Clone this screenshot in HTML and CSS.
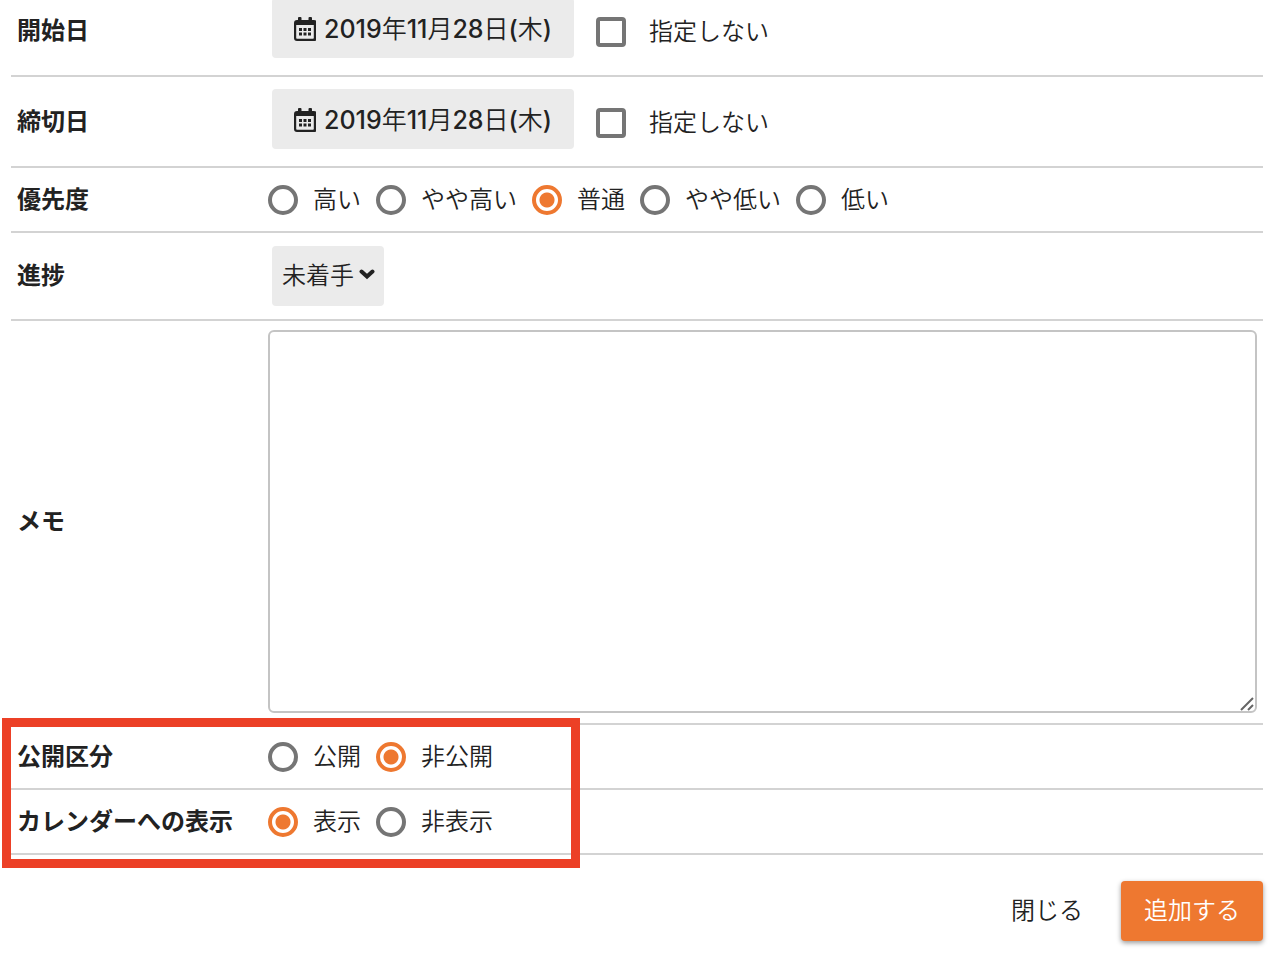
FILE: index.html
```html
<!DOCTYPE html>
<html lang="ja">
<head>
    <meta charset="UTF-8">
    <meta name="viewport" content="width=device-width, initial-scale=1.0">
    <title>ToDoの追加</title>
    <link rel="stylesheet" href="styles.css">
</head>
<body>
    <form class="todo-form">
        <!-- Dates -->
        <div class="row row-date">
            <span class="row-title">開始日</span>
            <div class="row-content">
                <button type="button" class="btn btn-date">
                    <svg class="icon-calendar" viewBox="0 0 22 24" aria-hidden="true">
                        <path fill-rule="evenodd" d="M5 0h1.500q1 0 1 1v2h7V1q0-1 1-1h1.500q1 0 1 1v2h2q3 0 3 3v15q0 3-3 3H3q-3 0-3-3V6q0-3 3-3h1V1q0-1 1-1zM2.200 8v13q0 .8.8.8h16q.8 0 .8-.8V8z"/>
                        <path d="M5 11h3v3H5zM9.500 11h3v3h-3zM14 11h3v3h-3zM5 15.500h3v3H5zM9.500 15.500h3v3h-3zM14 15.500h3v3h-3z"/>
                    </svg>
                    2019年11月28日(木)
                </button>
                <label class="check"><input type="checkbox" name="no_start">指定しない</label>
            </div>
        </div>
        <div class="row row-date">
            <span class="row-title">締切日</span>
            <div class="row-content">
                <button type="button" class="btn btn-date">
                    <svg class="icon-calendar" viewBox="0 0 22 24" aria-hidden="true">
                        <path fill-rule="evenodd" d="M5 0h1.500q1 0 1 1v2h7V1q0-1 1-1h1.500q1 0 1 1v2h2q3 0 3 3v15q0 3-3 3H3q-3 0-3-3V6q0-3 3-3h1V1q0-1 1-1zM2.200 8v13q0 .8.8.8h16q.8 0 .8-.8V8z"/>
                        <path d="M5 11h3v3H5zM9.500 11h3v3h-3zM14 11h3v3h-3zM5 15.500h3v3H5zM9.500 15.500h3v3h-3zM14 15.500h3v3h-3z"/>
                    </svg>
                    2019年11月28日(木)
                </button>
                <label class="check"><input type="checkbox" name="no_limit">指定しない</label>
            </div>
        </div>

        <!-- Priority -->
        <div class="row row-radio">
            <span class="row-title" id="priority-title">優先度</span>
            <div class="row-content" role="radiogroup" aria-labelledby="priority-title">
                <label class="radio"><input type="radio" name="priority">高い</label>
                <label class="radio"><input type="radio" name="priority">やや高い</label>
                <label class="radio"><input type="radio" name="priority" checked>普通</label>
                <label class="radio"><input type="radio" name="priority">やや低い</label>
                <label class="radio"><input type="radio" name="priority">低い</label>
            </div>
        </div>

        <!-- Progress -->
        <div class="row row-select">
            <label class="row-title" for="progress">進捗</label>
            <div class="row-content">
                <div class="select-box">
                    <select id="progress">
                        <option>未着手</option>
                    </select>
                    <svg class="icon-arrow" viewBox="0 0 16 12" aria-hidden="true">
                        <path d="M2.500 3.500L8 8.500l5.500-5"/>
                    </svg>
                </div>
            </div>
        </div>

        <!-- Memo -->
        <div class="row row-memo">
            <label class="row-title" for="memo">メモ</label>
            <div class="memo-box">
                <textarea id="memo"></textarea>
                <svg class="icon-grip" viewBox="0 0 16 16" aria-hidden="true">
                    <path d="M2 15L14 3M9 15l5-5"/>
                </svg>
            </div>
        </div>

        <!-- Visibility -->
        <div class="marked">
            <div class="row row-radio">
                <span class="row-title" id="public-title">公開区分</span>
                <div class="row-content" role="radiogroup" aria-labelledby="public-title">
                    <label class="radio"><input type="radio" name="public">公開</label>
                    <label class="radio"><input type="radio" name="public" checked>非公開</label>
                </div>
            </div>
            <div class="row row-radio">
                <span class="row-title" id="calendar-title">カレンダーへの表示</span>
                <div class="row-content" role="radiogroup" aria-labelledby="calendar-title">
                    <label class="radio"><input type="radio" name="calendar" checked>表示</label>
                    <label class="radio"><input type="radio" name="calendar">非表示</label>
                </div>
            </div>
        </div>

        <!-- Buttons -->
        <div class="actions">
            <button type="button" class="btn btn-close">閉じる</button>
            <button type="submit" class="btn btn-submit">追加する</button>
        </div>
    </form>
</body>
</html>
```
FILE: styles.css
```css
*,
*::after {
    box-sizing: border-box;
}

body {
    margin: 0;
    background-color: #fff;
    color: #222;
    font-family: Inter, "Noto Sans CJK JP", sans-serif;
    font-size: 24px;
    font-weight: 350;
    line-height: 36px;
}

button,
select,
textarea {
    font: inherit;
    color: inherit;
}

/* Form rows */
.todo-form {
    margin: -14px 17px 0 11px;
}

.row {
    display: grid;
    grid-template-columns: 257px 1fr;
    align-items: center;
    border-bottom: 2px solid #d3d3d3;
}

.row-title {
    padding-left: 6px;
    font-weight: 700;
}

.row-content {
    display: flex;
    align-items: center;
}

.row-date .row-content,
.row-select .row-content {
    padding-left: 4px;
}

.row-date .row-content {
    padding-top: 12px;
    padding-bottom: 17px;
    gap: 22px;
}

.row-radio {
    min-height: 65px;
}

.row-radio .row-content {
    gap: 15px;
}

.row-select .row-content {
    padding-top: 13px;
    padding-bottom: 13px;
}

/* Buttons */
.btn {
    height: 60px;
    padding: 0 22px;
    border: none;
    border-radius: 4px;
    cursor: pointer;
}

.btn-date {
    display: flex;
    align-items: center;
    gap: 8px;
    padding-top: 1px;
    background-color: #ebebeb;
    font-size: 25px;
    font-weight: 500;
    font-family: Inter, "Noto Sans CJK JP DemiLight", "Noto Sans CJK JP Light", "Noto Sans CJK JP", sans-serif;
}

.icon-calendar {
    width: 22px;
    height: 24px;
    fill: #222;
}

/* Checkboxes and radios */
.check,
.radio {
    display: flex;
    align-items: center;
    gap: 15px;
}

.check {
    gap: 23px;
    padding-top: 8px;
}

.check input,
.radio input {
    appearance: none;
    width: 30px;
    height: 30px;
    margin: 0;
    border: 4px solid #757575;
    border-radius: 4px;
}

.radio input {
    border-radius: 50%;
}

.radio input:checked {
    border-color: #ee7830;
    background: radial-gradient(circle, #ee7830 7px, #fff 8px);
}

/* Select */
.select-box {
    display: grid;
    align-items: center;
}

.select-box select {
    grid-area: 1 / 1;
    appearance: none;
    height: 60px;
    padding: 0 30px 0 10px;
    border: none;
    border-radius: 4px;
    background-color: #ebebeb;
}

.icon-arrow {
    grid-area: 1 / 1;
    justify-self: end;
    width: 16px;
    height: 12px;
    margin-right: 9px;
    margin-bottom: 4px;
    fill: none;
    stroke: #222;
    stroke-width: 4;
    stroke-linecap: round;
    pointer-events: none;
}

/* Memo */
.memo-box {
    position: relative;
    display: flex;
    padding: 9px 6px 10px 0;
}

.memo-box textarea {
    width: 100%;
    height: 383px;
    padding: 10px;
    border: 2px solid #c4c4c4;
    border-radius: 6px;
    resize: none;
}

.icon-grip {
    position: absolute;
    right: 8px;
    bottom: 12px;
    width: 16px;
    height: 16px;
    fill: none;
    stroke: #666;
    stroke-width: 2;
    pointer-events: none;
}

/* Red frame round the visibility rows */
.marked {
    position: relative;
}

.marked::after {
    content: "";
    position: absolute;
    top: -7px;
    bottom: -13px;
    left: -9px;
    width: 578px;
    border: 9px solid #ec4026;
    pointer-events: none;
}

/* Bottom buttons */
.actions {
    display: flex;
    justify-content: flex-end;
    gap: 16px;
    padding: 26px 0 20px;
}

.btn-close {
    background: none;
}

.btn-submit {
    padding: 0 23px;
    background-color: #ee7830;
    color: #fff;
    box-shadow: 0 2px 5px rgba(0, 0, 0, 0.4);
}
```
